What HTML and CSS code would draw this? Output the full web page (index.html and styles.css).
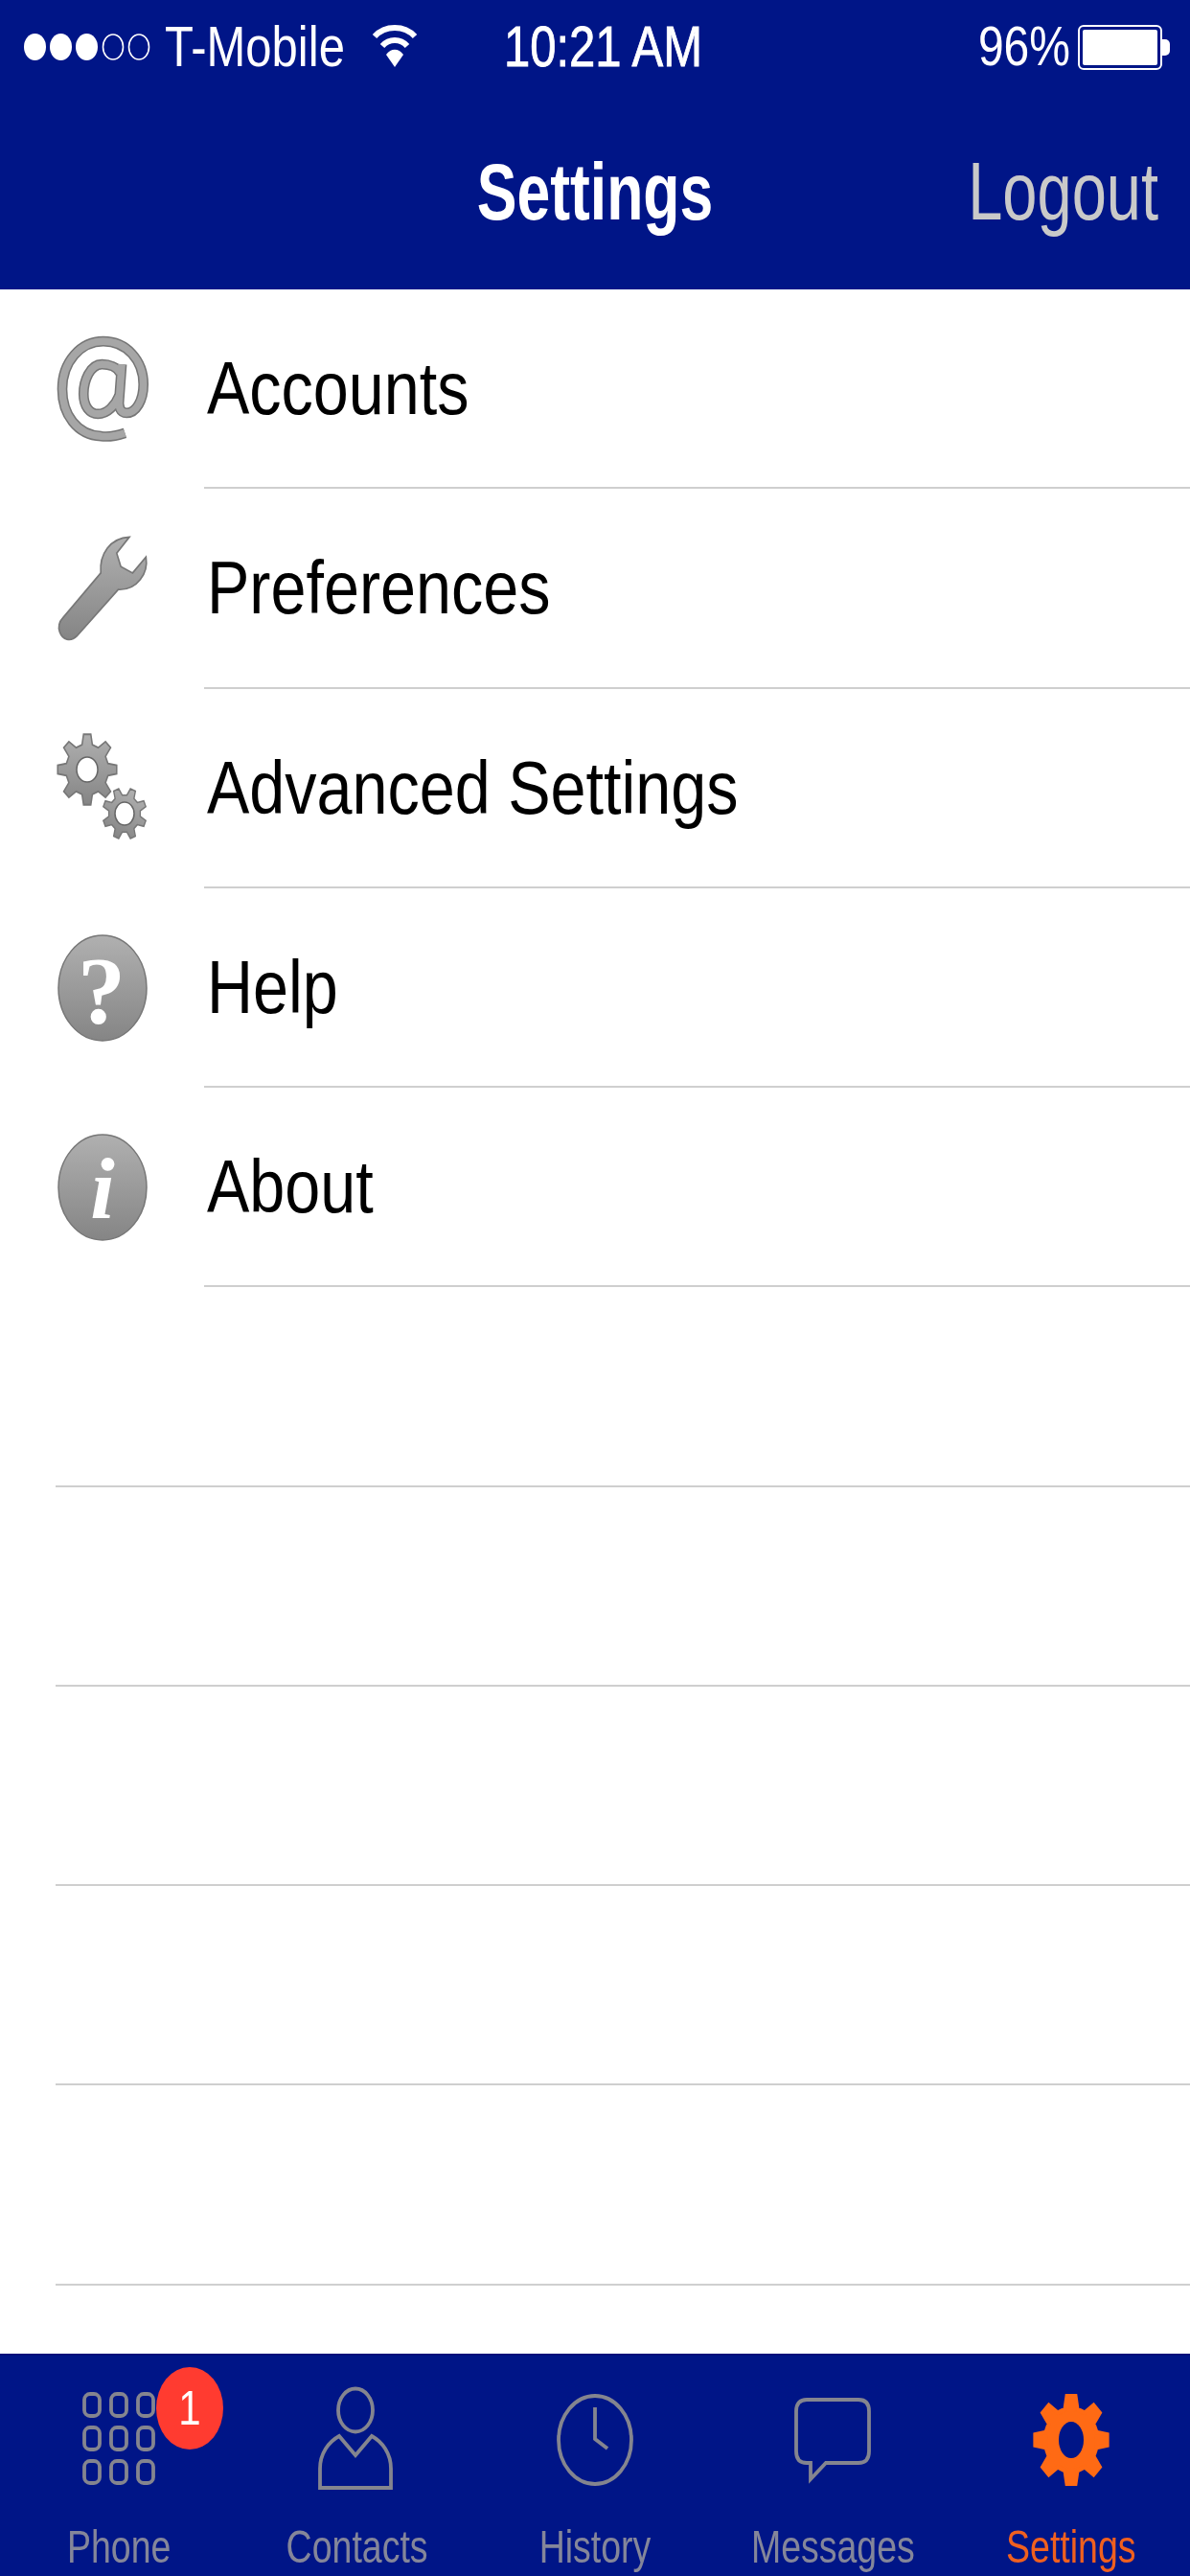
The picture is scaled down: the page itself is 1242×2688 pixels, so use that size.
FILE: index.html
```html
<!DOCTYPE html>
<html lang="en">
<head>
<meta charset="utf-8">
<title>Settings</title>
<link rel="stylesheet" href="styles.css">
</head>
<body>
<svg class="defs" width="0" height="0" aria-hidden="true">
  <defs>
    <linearGradient id="gray" x1="0" y1="0" x2="0" y2="1">
      <stop offset="0" stop-color="#b0b0b0"/>
      <stop offset="1" stop-color="#858585"/>
    </linearGradient>
    <path id="gear" fill-rule="evenodd" d="M-17.4-69.9L-12.2-99.3 12.2-99.3 17.4-69.9 37.1-61.7 61.6-78.8 78.8-61.6 61.7-37.1 69.9-17.4 99.3-12.2 99.3 12.2 69.9 17.4 61.7 37.1 78.8 61.6 61.6 78.8 37.1 61.7 17.4 69.9 12.2 99.3-12.2 99.3-17.4 69.9-37.1 61.7-61.6 78.8-78.8 61.6-61.7 37.1-69.9 17.4-99.3 12.2-99.3-12.2-69.9-17.4-61.7-37.1-78.8-61.6-61.6-78.8-37.1-61.7Z"/>
  </defs>
</svg>
<div class="app">
  <header class="top">
    <div class="status">
      <div class="status-left">
        <svg class="signal" viewBox="0 0 144 30" width="144" height="30">
          <ellipse cx="11.5" cy="15" rx="11.5" ry="14" fill="#fff"/>
          <ellipse cx="38.5" cy="15" rx="11.5" ry="14" fill="#fff"/>
          <ellipse cx="65.5" cy="15" rx="11.5" ry="14" fill="#fff"/>
          <ellipse cx="93" cy="15" rx="10.5" ry="13" fill="none" stroke="#fff" stroke-width="1.6"/>
          <ellipse cx="120" cy="15" rx="10.5" ry="13" fill="none" stroke="#fff" stroke-width="1.6"/>
        </svg>
        <span class="st-text carrier">T-Mobile</span>
        <svg class="wifi" viewBox="0 0 48 46" width="48" height="46">
          <path d="M3 14C14 2 34 2 45 14" fill="none" stroke="#fff" stroke-width="6"/>
          <path d="M11 24C18 16 30 16 37 24" fill="none" stroke="#fff" stroke-width="6"/>
          <path d="M15 33C20 26 28 26 33 33L24 46Z" fill="#fff"/>
        </svg>
      </div>
      <span class="st-text time">10:21 AM</span>
      <div class="status-right">
        <span class="st-text pct">96%</span>
        <span class="battery"><span class="battery-fill"></span></span>
        <span class="battery-nub"></span>
      </div>
    </div>
    <div class="nav">
      <span class="nav-side"></span>
      <span class="nav-title">Settings</span>
      <span class="nav-side nav-action"><span class="logout">Logout</span></span>
    </div>
  </header>

  <main class="list">
    <div class="row">
      <div class="row-icon">
        <svg viewBox="91 85 295 330" width="98" height="110">
          <g fill="none" stroke="#757575" stroke-width="32">
            <path d="M300 388C270 398 240 400 225 398 150 395 103 330 103 250 103 165 160 100 232 100 305 100 358 160 358 235 358 285 335 325 305 325 285 325 278 305 282 280L290 172"/>
            <path d="M285 200C275 180 250 172 228 172 190 172 170 225 170 265 170 305 190 328 215 328 245 328 270 300 282 270"/>
          </g>
          <g fill="none" stroke="#a6a6a6" stroke-width="23">
            <path d="M300 388C270 398 240 400 225 398 150 395 103 330 103 250 103 165 160 100 232 100 305 100 358 160 358 235 358 285 335 325 305 325 285 325 278 305 282 280L290 172"/>
            <path d="M285 200C275 180 250 172 228 172 190 172 170 225 170 265 170 305 190 328 215 328 245 328 270 300 282 270"/>
          </g>
        </svg>
      </div>
      <div class="row-label"><span class="label">Accounts</span></div>
    </div>
    <div class="row">
      <div class="row-icon">
        <svg viewBox="63 50 290 340" width="97" height="113">
          <path d="M195 170C190 110 225 60 285 57L245 108 258 150 295 170 337 120C345 170 310 225 250 222L120 368C100 388 75 380 66 355 60 340 65 322 75 312Z" fill="url(#gray)" stroke="#777" stroke-width="5"/>
        </svg>
      </div>
      <div class="row-label"><span class="label">Preferences</span></div>
    </div>
    <div class="row">
      <div class="row-icon">
        <svg viewBox="0 0 98 118" width="98" height="118">
          <g transform="translate(30 39) scale(.31 .37)">
            <use href="#gear" fill="url(#gray)" stroke="#777" stroke-width="5"/>
          </g>
          <ellipse cx="30" cy="39" rx="11" ry="13" fill="#fff" stroke="#666" stroke-width="1.5"/>
          <g transform="translate(69 85) scale(.23 .27) rotate(22.5)">
            <use href="#gear" fill="url(#gray)" stroke="#777" stroke-width="6"/>
          </g>
          <ellipse cx="69" cy="85" rx="10" ry="12" fill="#fff" stroke="#666" stroke-width="1.5"/>
        </svg>
      </div>
      <div class="row-label"><span class="label">Advanced Settings</span></div>
    </div>
    <div class="row">
      <div class="row-icon">
        <svg viewBox="0 0 94 112" width="94" height="112">
          <ellipse cx="46" cy="56" rx="46" ry="55" fill="url(#gray)" stroke="#777" stroke-width="1.5"/>
          <text class="glyph-q" x="45" y="92" text-anchor="middle">?</text>
        </svg>
      </div>
      <div class="row-label"><span class="label">Help</span></div>
    </div>
    <div class="row">
      <div class="row-icon">
        <svg viewBox="0 0 94 112" width="94" height="112">
          <ellipse cx="46" cy="56" rx="46" ry="55" fill="url(#gray)" stroke="#777" stroke-width="1.5"/>
          <text class="glyph-i" x="46" y="88" text-anchor="middle">i</text>
        </svg>
      </div>
      <div class="row-label"><span class="label">About</span></div>
    </div>
    <div class="row row-blank"></div>
    <div class="row row-blank"></div>
    <div class="row row-blank"></div>
    <div class="row row-blank"></div>
    <div class="row row-blank"></div>
  </main>

  <nav class="tabs">
    <div class="tab">
      <svg class="tab-icon" viewBox="0 0 120 112" width="120" height="112">
        <g fill="none" stroke="#84858f" stroke-width="3.8">
          <rect x="24" y="8" width="16" height="23" rx="6"/><rect x="52" y="8" width="16" height="23" rx="6"/><rect x="80" y="8" width="16" height="23" rx="6"/>
          <rect x="24" y="43" width="16" height="23" rx="6"/><rect x="52" y="43" width="16" height="23" rx="6"/><rect x="80" y="43" width="16" height="23" rx="6"/>
          <rect x="24" y="78" width="16" height="23" rx="6"/><rect x="52" y="78" width="16" height="23" rx="6"/><rect x="80" y="78" width="16" height="23" rx="6"/>
        </g>
      </svg>
      <span class="tab-label">Phone</span>
      <span class="badge"><span class="badge-num">1</span></span>
    </div>
    <div class="tab">
      <svg class="tab-icon" viewBox="0 0 120 112" width="120" height="112">
        <g fill="none" stroke="#84858f" stroke-width="3.8">
          <ellipse cx="58" cy="25" rx="18" ry="22.5"/>
          <path d="M21 106V86C21 70 30 58 41 52L58 72 75 52C86 58 95 70 95 86V106Z"/>
        </g>
      </svg>
      <span class="tab-label">Contacts</span>
    </div>
    <div class="tab">
      <svg class="tab-icon" viewBox="0 0 120 112" width="120" height="112">
        <g fill="none" stroke="#84858f" stroke-width="3.8">
          <ellipse cx="60" cy="56" rx="38" ry="46"/>
          <path d="M60 22V55L73 65"/>
        </g>
      </svg>
      <span class="tab-label">History</span>
    </div>
    <div class="tab">
      <svg class="tab-icon" viewBox="0 0 120 112" width="120" height="112">
        <path d="M33 14H87Q98 14 98 26V68Q98 80 87 80H53L37 97V80H33Q22 80 22 68V26Q22 14 33 14Z" fill="none" stroke="#84858f" stroke-width="3.8"/>
      </svg>
      <span class="tab-label">Messages</span>
    </div>
    <div class="tab tab-active">
      <svg class="tab-icon" viewBox="0 0 120 112" width="120" height="112">
        <g transform="translate(60 56)">
          <g transform="scale(.38 .46)">
            <use href="#gear" fill="#ff6a14" stroke="#ff6a14" stroke-width="10"/>
          </g>
          <ellipse rx="25" ry="30" fill="#ff6a14"/>
          <ellipse rx="13" ry="19" fill="#001587"/>
        </g>
      </svg>
      <span class="tab-label">Settings</span>
    </div>
  </nav>
</div>
</body>
</html>
```

FILE: styles.css
```css
* { box-sizing: border-box; }
html, body { margin: 0; padding: 0; }
body {
  width: 1242px;
  height: 2688px;
  overflow: hidden;
  background: #fff;
  font-family: "Liberation Sans", Arial, sans-serif;
}
.defs { position: absolute; }
.app {
  width: 1242px;
  height: 2688px;
  display: flex;
  flex-direction: column;
  filter: blur(.6px);
}

/* Header */
.top {
  height: 302px;
  background: #001587;
  color: #fff;
  display: flex;
  flex-direction: column;
}
.status {
  height: 98px;
  display: grid;
  grid-template-columns: 1fr auto 1fr;
  align-items: center;
  padding: 0 21px 0 25px;
}
.status-left { display: flex; align-items: center; }
.signal { flex: none; }
.carrier { font-size: 50px; margin-left: 3px; }
.wifi { margin-left: 28px; margin-top: -4px; flex: none; }
.st-text {
  display: inline-block;
  font-size: 49px;
  line-height: 50px;
  transform: scaleY(1.2);
}
.time {
  -webkit-text-stroke: .7px #fff;
  margin-left: 13px;
}
.status-right { display: flex; align-items: center; justify-content: flex-end; }
.pct { font-size: 48px; margin-right: 8px; }
.battery {
  width: 88px;
  height: 47px;
  padding: 3px;
  border: 2px solid #fff;
  border-radius: 6px;
  display: block;
}
.battery-fill { display: block; height: 100%; background: #fff; border-radius: 2px; }
.battery-nub {
  width: 8px;
  height: 17px;
  background: #fff;
  border-radius: 0 5px 5px 0;
}
.nav {
  flex: 1;
  display: grid;
  grid-template-columns: 1fr auto 1fr;
  align-items: center;
}
.nav-title {
  display: inline-block;
  font-size: 62.5px;
  font-weight: 700;
  line-height: 70px;
  transform: scaleY(1.33);
}
.nav-action { text-align: right; padding-right: 33px; }
.logout {
  display: inline-block;
  font-size: 65px;
  line-height: 70px;
  color: #c9c9c9;
  transform: scaleY(1.3);
}

/* List */
.list { flex: 1; }
.row {
  height: 208.25px;
  display: flex;
  padding-left: 58px;
}
.row-blank::after {
  content: "";
  flex: 1;
  align-self: flex-end;
  height: 2px;
  background: #cfcfcf;
}
.row-icon {
  width: 155px;
  flex: none;
  display: flex;
  align-items: center;
  padding-left: 3px;
}
.row-icon svg { overflow: visible; }
.row-label {
  flex: 1;
  display: flex;
  align-items: center;
  border-bottom: 2px solid #cfcfcf;
  padding-left: 3px;
}
.label {
  display: inline-block;
  font-size: 66.5px;
  line-height: 80px;
  color: #000;
  transform: scaleY(1.18);
}
.glyph-q {
  font-family: "Liberation Serif", serif;
  font-weight: 700;
  font-size: 100px;
  fill: #fff;
}
.glyph-i {
  font-family: "Liberation Serif", serif;
  font-weight: 700;
  font-style: italic;
  font-size: 92px;
  fill: #fff;
}

/* Tab bar */
.tabs {
  height: 232px;
  background: #001587;
  display: grid;
  grid-template-columns: repeat(5, 1fr);
  border-top: 2px solid #00107a;
  flex: none;
}
.tab {
  position: relative;
  display: flex;
  flex-direction: column;
  align-items: center;
  padding-top: 32px;
}
.tab-icon { flex: none; }
.tab-label {
  display: inline-block;
  margin-top: 33px;
  font-size: 37.5px;
  line-height: 44px;
  color: #84869a;
  transform: scaleY(1.3);
}
.tab-active .tab-label { color: #f0601f; }
.badge {
  position: absolute;
  left: 163px;
  top: 12px;
  width: 70px;
  height: 86px;
  border-radius: 50%;
  background: #ff3b30;
  color: #fff;
  display: flex;
  align-items: center;
  justify-content: center;
}
.badge-num {
  display: inline-block;
  font-size: 42px;
  line-height: 46px;
  transform: scaleY(1.2);
}
```
